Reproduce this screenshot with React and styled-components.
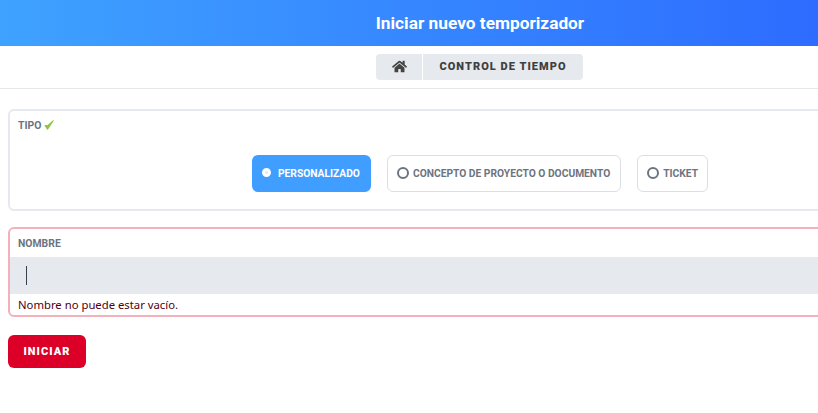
import React from 'react';
import styled, {createGlobalStyle} from 'styled-components';
import {FaHome} from 'react-icons/fa';

const GlobalStyle = createGlobalStyle`
    html, body{
        margin: 0;
        padding: 0;
        background: #fff;
        overflow: hidden;
    }
`;

const Page = styled.div`
    width: 960px;
    font-family: "Roboto", "Liberation Sans", sans-serif;
`;

const Header = styled.header`
    height: 46px;
    display: flex;
    align-items: center;
    justify-content: center;
    background: linear-gradient(90deg, #3fa2ff 0%, #2d6cff 85%);
    h1{
        margin: 0;
        color: #fff;
        font-size: 17.3px;
        font-weight: 700;
    }
`;

const BreadcrumbBar = styled.nav`
    height: 42px;
    display: flex;
    align-items: center;
    justify-content: center;
    border-bottom: 1px solid #e6e8ec;
`;

const Breadcrumb = styled.div`
    height: 26px;
    margin: -1px 0 0 -1px;
    display: flex;
    gap: 1px;
    border-radius: 4px;
    overflow: hidden;
`;

const Crumb = styled.div`
    display: flex;
    align-items: center;
    justify-content: center;
    width: ${p => p.$width}px;
    background: #e6e9ed;
    color: #3f3f3f;
    font-size: 11px;
    font-weight: 900;
    letter-spacing: 1.05px;
`;

const Form = styled.div`
    padding: 20px 8px 0;
    display: flex;
    flex-direction: column;
    align-items: flex-start;
`;

const Card = styled.section`
    box-sizing: border-box;
    width: 100%;
    border: 2px solid ${p => p.$error ? '#f4b1bc' : '#e6e9ed'};
    border-radius: 6px;
    margin-bottom: 16px;
`;

const Label = styled.label`
    display: flex;
    align-items: center;
    gap: 3px;
    padding: 0 8px;
    height: 28px;
    color: #6c7480;
    font-size: 10.4px;
    font-weight: 700;
`;

const RadioRow = styled.div`
    display: flex;
    justify-content: center;
    gap: 16px;
    padding: 16px 0 17px;
`;

const RadioButton = styled.button`
    box-sizing: border-box;
    height: 37px;
    padding: 0 ${p => p.$right}px 0 ${p => p.$selected ? 10 : 9}px;
    display: flex;
    align-items: center;
    gap: ${p => p.$selected ? 7 : 4}px;
    border: ${p => p.$selected ? 'none' : '1px solid #dcdee2'};
    border-radius: 6px;
    background: ${p => p.$selected ? '#3f9eff' : '#fff'};
    color: ${p => p.$selected ? '#fff' : '#6c7480'};
    font-family: inherit;
    font-size: 10.25px;
    font-weight: 700;
`;

const RadioMark = styled.span`
    box-sizing: border-box;
    display: block;
    border-radius: 50%;
    width: ${p => p.$selected ? 9 : 12}px;
    height: ${p => p.$selected ? 9 : 12}px;
    border: ${p => p.$selected ? '3px solid #fff' : '2px solid #6c7480'};
    background: ${p => p.$selected ? '#d8ebff' : 'transparent'};
    margin-top: ${p => p.$selected ? -3 : -1}px;
`;

const InputBox = styled.div`
    height: 37px;
    background: #e6e9ed;
    display: flex;
    align-items: center;
    padding-left: 16px;
`;

const Caret = styled.span`
    display: block;
    width: 1px;
    height: 19px;
    background: #36404d;
`;

const ErrorText = styled.p`
    margin: 0;
    padding: 0 8px;
    height: 21px;
    line-height: 21px;
    color: #4f0010;
    font-family: "Noto Sans", "Open Sans", sans-serif;
    font-size: 11.3px;
`;

const StartButton = styled.button`
    width: 78px;
    height: 33px;
    margin-top: 2px;
    border: none;
    border-radius: 6px;
    background: #dc0028;
    color: #fff;
    font-family: inherit;
    font-size: 11px;
    font-weight: 900;
    letter-spacing: 1.05px;
`;

const App = () => {

    return (
        <Page>
            <GlobalStyle />
            <Header>
                <h1>Iniciar nuevo temporizador</h1>
            </Header>

            <BreadcrumbBar>
                <Breadcrumb>
                    <Crumb $width={46}><FaHome size={15} color="#444" /></Crumb>
                    <Crumb $width={160}>CONTROL DE TIEMPO</Crumb>
                </Breadcrumb>
            </BreadcrumbBar>

            <Form>
                <Card>
                    <Label>
                        TIPO
                        <svg width="10" height="10" viewBox="0 0 10 10">
                            <path d="M1 5.5 L3.5 9.2 L9.2 0.8 L3.5 5.8 Z" fill="#8cc63f" stroke="#8cc63f" strokeWidth="1.1" strokeLinejoin="round" />
                        </svg>
                    </Label>
                    <RadioRow>
                        <RadioButton $selected $right={11}>
                            <RadioMark $selected />
                            PERSONALIZADO
                        </RadioButton>
                        <RadioButton $right={10}>
                            <RadioMark />
                            CONCEPTO DE PROYECTO O DOCUMENTO
                        </RadioButton>
                        <RadioButton $right={9}>
                            <RadioMark />
                            TICKET
                        </RadioButton>
                    </RadioRow>
                </Card>

                <Card $error>
                    <Label>NOMBRE</Label>
                    <InputBox><Caret /></InputBox>
                    <ErrorText>Nombre no puede estar vacío.</ErrorText>
                </Card>

                <StartButton>INICIAR</StartButton>
            </Form>
        </Page>
    );
}

export default App;
